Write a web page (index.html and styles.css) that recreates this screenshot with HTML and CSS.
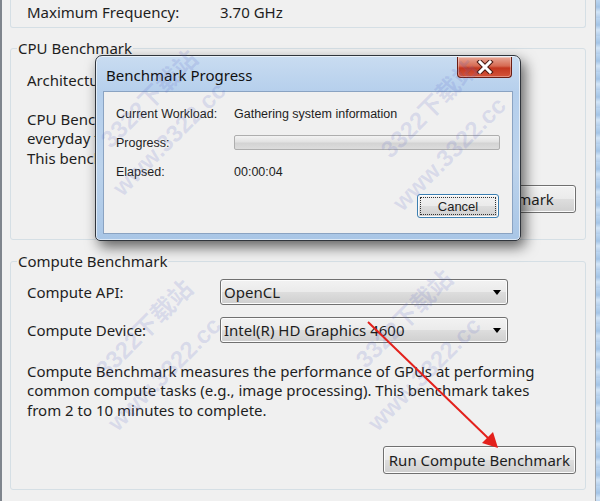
FILE: index.html
```html
<!DOCTYPE html>
<html lang="en">
<head>
  <meta charset="UTF-8">
  <title>Benchmark</title>
  <link rel="stylesheet" href="styles.css">
</head>
<body>

<div class="screen">
  <div class="window">
    <!-- Processor info (top is scrolled off) -->
    <div class="group-top">
      <div class="info-row"><span class="info-label">Maximum Frequency:</span><span>3.70 GHz</span></div>
    </div>

    <!-- CPU Benchmark -->
    <fieldset class="group cpu-group">
      <legend>CPU Benchmark</legend>
      <div class="group-body">
        <div class="info-row"><span class="info-label">Architecture:</span><span>Haswell</span></div>
        <p class="desc">CPU Benchmark measures the performance of CPUs at performing<br>everyday tasks such as compression, encryption and image tasks.<br>This benchmark takes from 2 to 10 minutes to complete.</p>
        <div class="btn-row"><button class="win-btn">Run CPU Benchmark</button></div>
      </div>
    </fieldset>

    <!-- Compute Benchmark -->
    <fieldset class="group compute-group">
      <legend>Compute Benchmark</legend>
      <div class="group-body">
        <div class="form-grid">
          <label>Compute API:</label>
          <div class="combo">OpenCL<span class="combo-arrow"></span></div>
          <label>Compute Device:</label>
          <div class="combo">Intel(R) HD Graphics 4600<span class="combo-arrow"></span></div>
        </div>
        <p class="desc compute-desc">Compute Benchmark measures the performance of GPUs at performing<br>common compute tasks (e.g., image processing). This benchmark takes<br>from 2 to 10 minutes to complete.</p>
        <div class="btn-row"><button class="win-btn run-btn">Run Compute Benchmark</button></div>
      </div>
    </fieldset>
  </div>
  <div class="glass-edge"></div>

  <!-- Progress dialog -->
  <div class="dialog">
    <div class="dialog-title">
      <span class="dialog-caption">Benchmark Progress</span>
      <div class="close-btn">
        <svg width="20" height="14" viewBox="0 0 20 14">
          <path d="M5 2 L15 12 M15 2 L5 12" stroke="#4a1a12" stroke-width="5" stroke-linecap="square"/>
          <path d="M5 2 L15 12 M15 2 L5 12" stroke="#ffffff" stroke-width="3" stroke-linecap="square"/>
        </svg>
      </div>
    </div>
    <div class="dialog-client">
      <div class="progress-grid">
        <span>Current Workload:</span><span>Gathering system information</span>
        <span>Progress:</span><div class="progress-bar"></div>
        <span>Elapsed:</span><span>00:00:04</span>
      </div>
      <div class="dialog-actions"><button class="win-btn cancel-btn"><span class="focus-ring">Cancel</span></button></div>
    </div>
  </div>

  <!-- site watermark -->
  <div class="mark mark-1">3322下载站</div>
  <div class="mark mark-2">www.3322.cc</div>
  <div class="mark mark-3">3322下载站</div>
  <div class="mark mark-4">www.3322.cc</div>
  <div class="mark mark-5">3322下载站</div>
  <div class="mark mark-6">www.3322.cc</div>
  <div class="mark mark-7">3322下载站</div>
  <div class="mark mark-8">www.3322.cc</div>

  <!-- annotation arrow -->
  <svg class="arrow" width="600" height="501" viewBox="0 0 600 501">
    <line x1="368" y1="322" x2="488" y2="438" stroke="#e3211c" stroke-width="2"/>
    <polygon points="498,448 482,443 493,432" fill="#e3211c"/>
  </svg>
</div>

</body>
</html>
```

FILE: styles.css
```css
* { box-sizing: border-box; }

body {
  margin: 0;
  font-family: "Noto Sans", sans-serif;
  font-size: 15px;
  color: #1e1e1e;
  background: #f0f0f0;
}

.screen {
  position: relative;
  display: flex;
  width: 600px;
  height: 501px;
  overflow: hidden;
}

.window {
  flex: 1;
  background: #f0f0f0;
  border-left: 2px solid #7e848c;
  border-right: 1px solid #a3a7ad;
  padding: 0 9px 0 8px;
}

.glass-edge {
  width: 4px;
  background: repeating-linear-gradient(180deg, #bcd6f0 0, #a4c4e6 7px, #d3e5f7 12px, #b2cdea 18px);
}

.group-top {
  height: 28px;
  border: 1px solid #d5dfe5;
  border-top: none;
  border-radius: 0 0 3px 3px;
  padding: 2px 16px 0;
}

.info-row {
  display: flex;
  line-height: 20px;
}

.info-label { width: 193px; }

.group {
  margin: 0;
  padding: 0 9px 16px 16px;
  border: 1px solid #d5dfe5;
  border-radius: 3px;
  min-width: 0;
}

.group legend {
  margin-left: -10px;
  padding: 0 1px;
  line-height: 20px;
}

.cpu-group { margin-top: 10px; height: 202px; }
.compute-group { margin-top: 11px; height: 239px; }

.cpu-group .group-body { padding-top: 12px; }
.compute-group .group-body { padding-top: 8px; }

.desc {
  margin: 20px 0 0;
  line-height: 19.3px;
  white-space: nowrap;
}

.btn-row {
  display: flex;
  justify-content: flex-end;
}

.cpu-group .btn-row { margin-top: 17px; }

.win-btn {
  font-family: inherit;
  font-size: 15px;
  color: #1e1e1e;
  height: 28px;
  padding: 0 5px;
  white-space: nowrap;
  border: 1px solid #707070;
  border-radius: 3px;
  background: linear-gradient(180deg, #f2f2f2 0%, #ebebeb 48%, #dddddd 52%, #cfcfcf 100%);
  box-shadow: inset 0 0 0 1px #fcfcfc;
}

.cpu-group .win-btn { width: 190px; }

.form-grid {
  display: grid;
  grid-template-columns: 193px 288px;
  row-gap: 12px;
  align-items: center;
}

.combo {
  position: relative;
  height: 26px;
  line-height: 24px;
  padding-left: 3px;
  border: 1px solid #707070;
  border-radius: 3px;
  background: linear-gradient(180deg, #f2f2f2 0%, #ebebeb 48%, #dddddd 52%, #cfcfcf 100%);
  box-shadow: inset 0 0 0 1px #fcfcfc;
}

.combo-arrow {
  position: absolute;
  right: 6px;
  top: 10px;
  border-left: 4px solid transparent;
  border-right: 4px solid transparent;
  border-top: 5px solid #000;
}

.compute-desc { margin-top: 19px; }
.compute-group .btn-row { margin-top: 26px; }

/* dialog */
.dialog {
  position: absolute;
  left: 95px;
  top: 55px;
  width: 426px;
  height: 186px;
  padding: 0 7px 8px 7px;
  border: 1px solid #30353c;
  border-radius: 7px 7px 5px 5px;
  background: linear-gradient(180deg, #c9dcf1 0%, #b5cfec 20%, #bcd3ec 60%, #a9c6e6 100%);
  box-shadow: 4px 6px 14px rgba(0,0,0,0.6), inset 0 0 0 1px rgba(255,255,255,0.6);
}

.dialog-title {
  display: flex;
  justify-content: space-between;
  height: 35px;
  font-size: 15px;
  color: #111;
}

.dialog-caption { padding: 9px 0 0 3px; }

.close-btn {
  flex: none;
  width: 55px;
  height: 21px;
  margin-top: 1px;
  margin-right: 1px;
  display: flex;
  align-items: center;
  justify-content: center;
  border: 1px solid #6a1d14;
  border-top: none;
  border-radius: 0 0 4px 4px;
  background: linear-gradient(180deg, #e8a897 0%, #d66a52 45%, #c3371f 55%, #d4543a 100%);
  box-shadow: inset 0 0 0 1px rgba(255,255,255,0.35);
}

.dialog-client {
  height: 143px;
  background: #f0f0f0;
  border: 1px solid #8aa3c2;
  font-family: "Liberation Sans", Arial, sans-serif;
  font-size: 12.5px;
  padding: 7px 12px 0 12px;
}

.progress-grid {
  display: grid;
  grid-template-columns: 118px 1fr;
  grid-auto-rows: 29px;
  align-items: center;
}

.progress-bar {
  height: 15px;
  border: 1px solid #aeaeae;
  border-radius: 2px;
  background: linear-gradient(180deg, #f3f3f3 0%, #e2e2e2 45%, #d3d3d3 55%, #dcdcdc 100%);
}

.dialog-actions {
  display: flex;
  justify-content: flex-end;
  margin-top: 8px;
  padding-right: 1px;
}

.cancel-btn {
  width: 82px;
  height: 24px;
  padding: 2px;
  font-family: "Liberation Sans", Arial, sans-serif;
  font-size: 13px;
  border-color: #3c7fb1;
}

.focus-ring {
  display: block;
  height: 100%;
  line-height: 18px;
  border: 1px dotted #333;
}

/* watermark */
.mark {
  position: absolute;
  font-family: "Liberation Sans", "Noto Sans CJK SC", sans-serif;
  font-weight: bold;
  font-size: 24px;
  color: rgba(90, 100, 200, 0.16);
  transform: rotate(-45deg);
  white-space: nowrap;
  pointer-events: none;
}

.mark-1 { left: 85px; top: 80px; }
.mark-2 { left: 95px; top: 125px; }
.mark-3 { left: 365px; top: 90px; }
.mark-4 { left: 375px; top: 140px; }
.mark-5 { left: 80px; top: 310px; }
.mark-6 { left: 90px; top: 360px; }
.mark-7 { left: 340px; top: 300px; }
.mark-8 { left: 350px; top: 360px; }

.arrow {
  position: absolute;
  left: 0;
  top: 0;
  pointer-events: none;
}
```
